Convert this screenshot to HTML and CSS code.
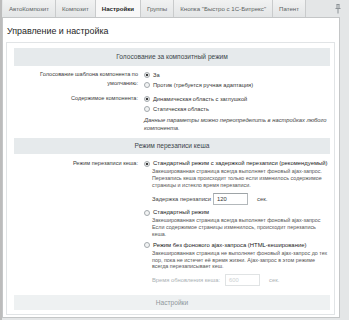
FILE: index.html
```html
<!DOCTYPE html>
<html lang="ru">
<head>
    <meta charset="UTF-8">
    <title>Управление и настройка</title>
    <link rel="stylesheet" href="styles.css">
</head>
<body>

<div class="window">
    <div class="tabs">
        <span class="tab">АвтоКомпозит</span>
        <span class="tab">Композит</span>
        <span class="tab active">Настройки</span>
        <span class="tab">Группы</span>
        <span class="tab">Кнопка "Быстро с 1С-Битрекс"</span>
        <span class="tab">Патент</span>
        <span class="pin">
            <svg width="6" height="10" viewBox="0 0 6 10">
                <path d="M1.5 0.5h3M2 0.5v4M4 0.5v4M0.5 4.5h5M3 4.5v5" stroke="#8c9296" stroke-width="1" fill="none"/>
            </svg>
        </span>
    </div>

    <div class="panel">
        <h1 class="title">Управление и настройка</h1>

        <div class="form">
            <div class="section">Голосование за композитный режим</div>

            <div class="row">
                <div class="label">Голосование шаблона компонента по умолчанию:</div>
                <div class="field">
                    <div class="radio"><span class="dot on"></span>За</div>
                    <div class="radio"><span class="dot"></span>Против (требуется ручная адаптация)</div>
                </div>
            </div>

            <div class="row">
                <div class="label">Содержимое компонента:</div>
                <div class="field">
                    <div class="radio"><span class="dot on"></span>Динамическая область с заглушкой</div>
                    <div class="radio"><span class="dot"></span>Статическая область</div>
                </div>
            </div>

            <div class="note">Данные параметры можно переопределить в настройках любого<br>компонента.</div>

            <div class="section second">Режим перезаписи кеша</div>

            <div class="row cache">
                <div class="label">Режим перезаписи кеша:</div>
                <div class="field">
                    <div class="radio strong"><span class="dot on"></span>Стандартный режим с задержкой перезаписи (рекомендуемый)</div>
                    <div class="desc">Закешированная страница всегда выполняет фоновый ajax-запрос.<br>Перезапись кеша происходит только если изменилось содержимое<br>страницы и истекло время перезаписи.</div>
                    <div class="inline">
                        Задержка перезаписи <span class="input">120</span> сек.
                    </div>

                    <div class="radio strong gap"><span class="dot"></span>Стандартный режим</div>
                    <div class="desc">Закешированная страница всегда выполняет фоновый ajax-запрос<br>Если содержимое страницы изменилось, происходит перезапись<br>кеша.</div>

                    <div class="radio strong gap"><span class="dot"></span>Режим без фонового ajax-запроса (HTML-кеширование)</div>
                    <div class="desc">Закешированная страница не выполняет фоновый ajax-запрос до тех<br>пор, пока не истечет её время жизни. Ajax-запрос в этом режиме<br>всегда перезаписывает кеш.</div>
                    <div class="inline disabled">
                        Время обновления кеша: <span class="input">600</span> сек.
                    </div>
                </div>
            </div>

            <div class="section last">Настройки</div>
        </div>
    </div>
</div>

</body>
</html>
```

FILE: styles.css
```css
body {
    margin: 0;
    background-color: #e4e6e7;
    font-family: "Liberation Sans", Arial, sans-serif;
    color: #333;
}

.window {
    height: 320px;
    border-left: 2px solid #bcbcbc;
    box-sizing: border-box;
    overflow: hidden;
}

.tabs {
    display: flex;
    height: 17px;
    padding-left: 1px;
}

.tab {
    display: flex;
    align-items: center;
    padding: 0 6px;
    font-size: 6.1px;
    color: #5a5f62;
    background: linear-gradient(#f1f2f2, #e3e5e6);
    border-right: 1px solid #c9cbcc;
    white-space: nowrap;
}

.tab.active {
    background: #f8f8f8;
    color: #222;
    font-weight: bold;
}

.pin {
    display: flex;
    align-items: center;
    margin-left: auto;
    margin-right: 8px;
}

.panel {
    width: 338px;
    height: 301px;
    box-sizing: border-box;
    background-color: #fff;
    border: 1px solid #c4c6c7;
    padding: 0 4px 2px 3px;
    display: flex;
    flex-direction: column;
}

.title {
    margin: 0;
    padding: 7px 0 5px 1px;
    font-size: 8.9px;
    line-height: 12px;
    font-weight: normal;
    color: #1e1e1e;
}

.form {
    flex: 1;
    border: 1px solid #e1e4e6;
    padding: 5px 4px 0 7px;
    overflow: hidden;
}

.section {
    height: 18px;
    line-height: 18px;
    text-align: center;
    font-size: 6.6px;
    color: #3d464b;
    background-color: #e6eaec;
}

.section.second {
    margin-top: 6px;
    height: 16px;
    line-height: 16px;
}

.section.last {
    margin-top: 9px;
    height: 15px;
    line-height: 15px;
    color: #8e979b;
    background-color: #eef1f2;
}

.row {
    display: flex;
    margin-top: 4px;
}

.row.cache {
    margin-top: 5px;
}

.label {
    width: 124px;
    padding-right: 5px;
    text-align: right;
    font-size: 5.6px;
    line-height: 9px;
    color: #3a3a3a;
    flex-shrink: 0;
}

.field {
    flex: 1;
    min-width: 0;
}

.radio {
    display: flex;
    align-items: center;
    font-size: 5.7px;
    line-height: 10px;
    color: #333;
    white-space: nowrap;
}

.radio.strong {
    line-height: 9px;
    font-size: 5.9px;
    color: #222;
}

.radio.gap {
    margin-top: 3px;
}

.dot {
    width: 4px;
    height: 4px;
    margin: 0 3px 0 1px;
    border: 1px solid #a3a9ad;
    border-radius: 50%;
    background-color: #f3f4f4;
    flex-shrink: 0;
}

.dot.on {
    background: radial-gradient(circle, #3b3b3b 1.1px, #eceeee 1.6px);
}

.note {
    margin: 2px 0 0 130px;
    font-size: 5.8px;
    line-height: 8px;
    font-style: italic;
    color: #444;
    white-space: nowrap;
}

.desc {
    margin-left: 9px;
    font-size: 5.4px;
    line-height: 6.8px;
    color: #555;
    white-space: nowrap;
}

.inline {
    display: flex;
    align-items: center;
    margin: 5px 0 0 9px;
    font-size: 5.8px;
    color: #444;
    white-space: nowrap;
}

.input {
    width: 30px;
    height: 10px;
    line-height: 10px;
    margin: 0 9px 0 2px;
    padding-left: 3px;
    border: 1px solid #b3b8bb;
    border-top-color: #9ea4a7;
    background-color: #fff;
    color: #333;
}

.inline.disabled {
    margin-top: 4px;
    color: #aab1b4;
}

.inline.disabled .input {
    margin-left: 5px;
    border-color: #e0e3e4;
    color: #ccd0d2;
}
```
